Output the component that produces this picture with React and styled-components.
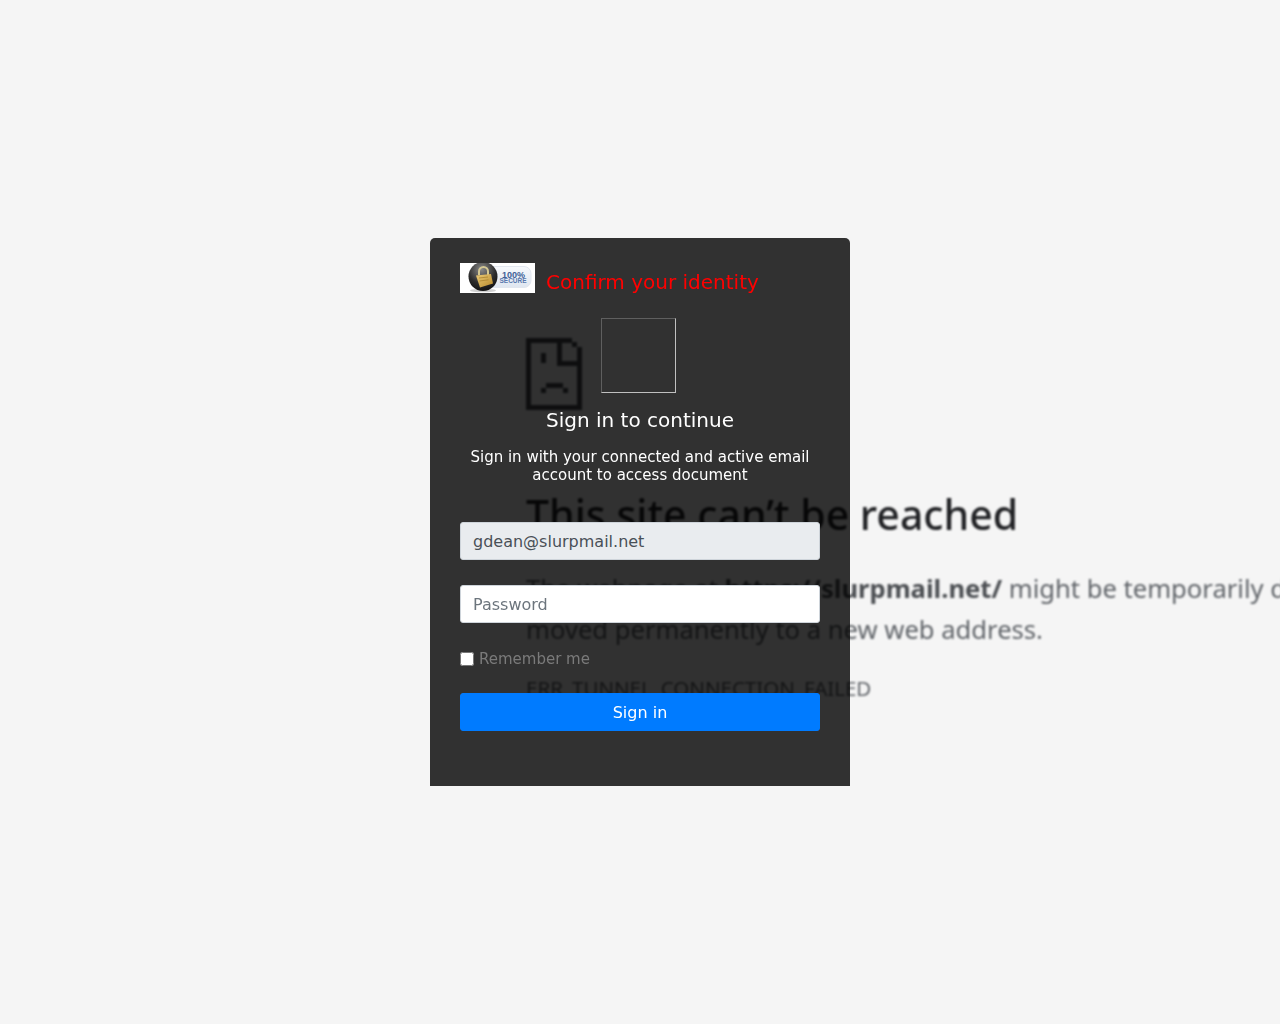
import React from 'react'
import styled, { createGlobalStyle } from 'styled-components'

const GlobalStyle = createGlobalStyle`
  html, body {
    margin: 0;
    height: 100%;
    background: #f5f5f5;
    font-family: "DejaVu Sans", sans-serif;
    overflow: hidden;
  }
  #root { height: 100%; }
  * { box-sizing: border-box; }
`

const Page = styled.div`
  position: relative;
  width: 100%;
  height: 1024px;
  overflow: hidden;
  display: flex;
  align-items: center;
  justify-content: center;
`

// the unreachable page sits behind the login card
const ErrorLayer = styled.div`
  position: absolute;
  inset: 0;
  padding: 338px 0 0 526px;
  font-family: "Noto Sans", sans-serif;
  color: #5f6368;
  white-space: nowrap;
  filter: blur(0.8px);
`

const ErrorIcon = styled.svg`
  display: block;
  width: 56px;
  height: 72px;
`

const ErrorTitle = styled.h1`
  margin: 76px 0 0;
  font-size: 41px;
  line-height: 56px;
  font-weight: 500;
  color: #202124;
`

const ErrorText = styled.p`
  margin: 26px 0 0;
  font-size: 25.6px;
  line-height: 41px;
  b { font-weight: 700; color: #4b4e52; }
`

const ErrorCode = styled.div`
  margin-top: 24px;
  font-size: 20.5px;
  line-height: 28px;
`

const Card = styled.div`
  position: relative;
  width: 420px;
  height: 548px;
  padding: 25px 30px;
  background: rgba(0, 0, 0, 0.8);
  border-radius: 5px 5px 0 0;
`

const Header = styled.div`
  display: flex;
  align-items: flex-start;
  gap: 11px;
  height: 30px;
`

const Logo = styled.svg`
  display: block;
  width: 75px;
  height: 30px;
`

const Title = styled.h4`
  margin: 6px 0 0;
  font-size: 20px;
  line-height: 26px;
  font-weight: 400;
  color: #ff0000;
  white-space: nowrap;
`

const BrokenImage = styled.div`
  width: 75px;
  height: 75px;
  margin: 25px 0 0 141px;
  border: 1px solid;
  border-color: #5f5f5f #c0c0c0 #c0c0c0 #5f5f5f;
`

const Heading = styled.h5`
  margin: 15px 0 0;
  font-size: 20px;
  line-height: 24px;
  font-weight: 400;
  color: #fff;
  text-align: center;
`

const Intro = styled.p`
  margin: 16px 0 0;
  font-size: 15px;
  line-height: 18px;
  color: #fff;
  text-align: center;
`

const Field = styled.input`
  display: block;
  width: 100%;
  height: 38px;
  margin-top: ${p => p.$top}px;
  padding: 6px 12px;
  font-family: inherit;
  font-size: 16px;
  line-height: 24px;
  color: #495057;
  background: ${p => (p.readOnly ? '#e9ecef' : '#fff')};
  border: 1px solid #ced4da;
  border-radius: 3px;
  outline: none;
  &::placeholder { color: #6c757d; opacity: 1; }
`

const Remember = styled.label`
  display: flex;
  align-items: center;
  gap: 5px;
  margin-top: 27px;
  height: 19px;
  font-size: 15px;
  line-height: 19px;
  color: #7a7a7a;
  input { margin: -1px 0 0; width: 14px; height: 14px; }
`

const SubmitButton = styled.button`
  display: block;
  width: 100%;
  height: 38px;
  margin-top: 24px;
  font-family: inherit;
  font-size: 16px;
  color: #fff;
  background: #007bff;
  border: 1px solid #007bff;
  border-radius: 3px;
`

const SadFile = () => (
  <ErrorIcon viewBox="0 0 56 72" shapeRendering="crispEdges">
    <path
      fill="#45484d"
      d="M0 0h46v5H5v62h46V16h5v56H0zM31 4h5v19h20v5H31zM46 4h5v5h-5zM51 9h5v7h-5zM15 15h5v10h-5zM20 45h17v5H20zM15 50h5v5h-5zM37 50h5v5h-5z"
    />
  </ErrorIcon>
)

const SecureBadge = () => (
  <Logo viewBox="0 0 75 30">
    <defs>
      <radialGradient id="ball" cx="45%" cy="25%" r="80%">
        <stop offset="0" stopColor="#8a8a8a" />
        <stop offset="0.6" stopColor="#2c2c2c" />
        <stop offset="1" stopColor="#0f0f0f" />
      </radialGradient>
      <linearGradient id="pill" x1="0" y1="0" x2="0" y2="1">
        <stop offset="0" stopColor="#f7f9fc" />
        <stop offset="1" stopColor="#dfe6f0" />
      </linearGradient>
      <linearGradient id="gold" x1="0" y1="0" x2="1" y2="1">
        <stop offset="0" stopColor="#eccb78" />
        <stop offset="1" stopColor="#b78a2c" />
      </linearGradient>
    </defs>
    <rect width="75" height="30" fill="#fff" />
    <rect x="24" y="3.5" width="47" height="21" rx="7" fill="url(#pill)" stroke="#e2e7ef" />
    <ellipse cx="23" cy="27.5" rx="13" ry="1.8" fill="#d0d0d0" />
    <circle cx="23" cy="13.5" r="14.5" fill="url(#ball)" />
    <path d="M19 12V8.5a4.5 4.5 0 0 1 9 0V12" fill="none" stroke="#d4c894" strokeWidth="2" />
    <path d="M16 12.5l15-1.5 2 9.5-13 4z" fill="url(#gold)" />
    <path d="M19 15l9-1M19.5 18l9-1.2" stroke="#a47c2a" strokeWidth="0.7" fill="none" />
    <text x="42" y="14.5" fontFamily="Liberation Sans, sans-serif" fontSize="9" fontWeight="700" fill="#3f5f96">100%</text>
    <text x="39.5" y="20" fontFamily="Liberation Sans, sans-serif" fontSize="6.5" fontWeight="700" fill="#5878ad">SECURE</text>
  </Logo>
)

export default function App() {
  return (
    <Page>
      <GlobalStyle />
      <ErrorLayer>
        <SadFile />
        <ErrorTitle>This site can’t be reached</ErrorTitle>
        <ErrorText>
          The webpage at <b>https://slurpmail.net/</b> might be temporarily down or it may have
          <br />
          moved permanently to a new web address.
        </ErrorText>
        <ErrorCode>ERR_TUNNEL_CONNECTION_FAILED</ErrorCode>
      </ErrorLayer>
      <Card>
        <Header>
          <SecureBadge />
          <Title>Confirm your identity</Title>
        </Header>
        <BrokenImage />
        <Heading>Sign in to continue</Heading>
        <Intro>Sign in with your connected and active email account to access document</Intro>
        <Field $top={38} type="email" readOnly value="gdean@slurpmail.net" />
        <Field $top={25} type="password" placeholder="Password" />
        <Remember>
          <input type="checkbox" />
          Remember me
        </Remember>
        <SubmitButton type="button">Sign in</SubmitButton>
      </Card>
    </Page>
  )
}
